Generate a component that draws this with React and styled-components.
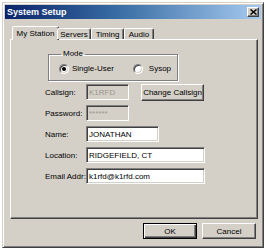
import React from 'react';
import styled, { createGlobalStyle } from 'styled-components';

const Global = createGlobalStyle`
	html, body {
		margin: 0;
		padding: 0;
		background: #ffffff;
	}
	body {
		padding: 2px;
		font-family: "Liberation Sans", Arial, sans-serif;
		font-size: 8px;
		color: #000;
	}
`;

const Window = styled.div`
	box-sizing: border-box;
	width: 262px;
	height: 246px;
	background: #d4d0c8;
	border: 1px solid;
	border-color: #d4d0c8 #404040 #404040 #d4d0c8;
	box-shadow: inset 1px 1px 0 #ffffff, inset -1px -1px 0 #808080;
	padding: 2px;
	display: flex;
	flex-direction: column;
`;

const TitleBar = styled.div`
	height: 14px;
	display: flex;
	align-items: center;
	justify-content: space-between;
	padding: 0 2px 0 2px;
	background: linear-gradient(to right, #0a246a 0%, #3a6ea5 45%, #a6caf0 100%);
`;

const Title = styled.span`
	color: #fff;
	font-weight: bold;
	font-size: 9px;
`;

const CloseButton = styled.div`
	box-sizing: border-box;
	width: 12px;
	height: 10px;
	background: #d4d0c8;
	border: 1px solid;
	border-color: #ffffff #404040 #404040 #ffffff;
	box-shadow: inset -1px -1px 0 #808080;
	display: flex;
	align-items: center;
	justify-content: center;
`;

const Body = styled.div`
	flex: 1;
	display: flex;
	flex-direction: column;
	padding: 7px 3px 0 5px;
`;

const TabStrip = styled.div`
	display: flex;
	align-items: flex-end;
	height: 13px;
	padding-left: 4px;
	position: relative;
	z-index: 1;
`;

const Tab = styled.div`
	box-sizing: border-box;
	width: ${p => p.$w}px;
	height: ${p => (p.$active ? 14 : 11)}px;
	margin: ${p => (p.$active ? '0 -2px -1px -2px' : '0')};
	padding-top: ${p => (p.$active ? 2 : 1)}px;
	text-align: center;
	background: #d4d0c8;
	border: 1px solid;
	border-bottom: none;
	border-color: #ffffff #404040 transparent #ffffff;
	border-radius: 2px 2px 0 0;
	box-shadow: inset -1px 0 0 #808080;
	white-space: nowrap;
`;

const Panel = styled.div`
	box-sizing: border-box;
	height: 180px;
	border: 1px solid;
	border-color: #ffffff #404040 #404040 #ffffff;
	box-shadow: inset -1px -1px 0 #808080;
	padding: 9px 0 0 34px;
`;

const ModeBox = styled.fieldset`
	box-sizing: border-box;
	width: 130px;
	height: 32px;
	margin: 0 0 3px 3px;
	padding: 0 0 0 10px;
	border: 1px solid #808080;
	box-shadow: 1px 1px 0 #ffffff, inset 1px 1px 0 #ffffff;
	display: flex;
	align-items: center;
	gap: 19px;
`;

const Legend = styled.legend`
	padding: 0 2px;
	margin-left: 2px;
	font-size: 8px;
	line-height: 10px;
`;

const Radio = styled.label`
	display: flex;
	align-items: center;
	gap: ${p => p.$gap || 3}px;
	margin-top: -2px;
`;

const RadioDot = styled.span`
	box-sizing: border-box;
	width: 10px;
	height: 10px;
	border-radius: 50%;
	background: #fff;
	border: 1px solid;
	border-color: #808080 #ffffff #ffffff #808080;
	box-shadow: inset 1px 1px 0 #404040, inset -1px -1px 0 #d4d0c8;
	display: flex;
	align-items: center;
	justify-content: center;

	&::after {
		content: '';
		width: 4px;
		height: 4px;
		border-radius: 50%;
		background: ${p => (p.$checked ? '#000' : 'transparent')};
	}
`;

const Form = styled.div`
	display: grid;
	grid-template-columns: 41px auto;
	grid-auto-rows: 16px;
	row-gap: 5px;
	align-items: center;
`;

const Label = styled.span`
	white-space: nowrap;
`;

const Field = styled.div`
	display: flex;
	align-items: flex-start;
	gap: 12px;
	height: 16px;
`;

const Input = styled.div`
	box-sizing: border-box;
	width: ${p => p.$w}px;
	height: 16px;
	padding: 0 2px;
	border: 1px solid;
	border-color: #808080 #ffffff #ffffff #808080;
	box-shadow: inset 1px 1px 0 #404040, inset -1px -1px 0 #d4d0c8;
	background: ${p => (p.$disabled ? '#d4d0c8' : '#ffffff')};
	color: ${p => (p.$disabled ? '#9a9890' : '#000')};
	white-space: nowrap;
	overflow: hidden;
	display: flex;
	align-items: center;
`;

const Button = styled.div`
	box-sizing: border-box;
	width: ${p => p.$w}px;
	height: ${p => p.$h || 16}px;
	display: flex;
	align-items: center;
	justify-content: center;
	background: #d4d0c8;
	border: 1px solid;
	border-color: ${p => (p.$default ? '#000' : '#ffffff #404040 #404040 #ffffff')};
	box-shadow: ${p =>
		p.$default
			? 'inset 1px 1px 0 #ffffff, inset -1px -1px 0 #404040, inset -2px -2px 0 #808080'
			: 'inset -1px -1px 0 #808080'};
	white-space: nowrap;
`;

const Footer = styled.div`
	display: flex;
	justify-content: flex-end;
	gap: 5px;
	margin-top: 4px;
	padding-right: 2px;
`;

const CloseIcon = () => (
	<svg width="7" height="6" viewBox="0 0 7 6">
		<path d="M0.5 0.5 L6.5 5.5 M6.5 0.5 L0.5 5.5" stroke="#000" strokeWidth="1.5" />
	</svg>
);

const tabs = [
	{ name: 'My Station', w: 43, active: true },
	{ name: 'Servers', w: 34 },
	{ name: 'Timing', w: 33 },
	{ name: 'Audio', w: 30 },
];

const App = () => {
	return (
		<>
			<Global />
			<Window>
				<TitleBar>
					<Title>System Setup</Title>
					<CloseButton>
						<CloseIcon />
					</CloseButton>
				</TitleBar>
				<Body>
					<TabStrip>
						{tabs.map(t => (
							<Tab key={t.name} $w={t.active ? t.w + 4 : t.w} $active={t.active}>
								{t.name}
							</Tab>
						))}
					</TabStrip>
					<Panel>
						<ModeBox>
							<Legend>Mode</Legend>
							<Radio>
								<RadioDot $checked />
								Single-User
							</Radio>
							<Radio $gap={6}>
								<RadioDot />
								Sysop
							</Radio>
						</ModeBox>
						<Form>
							<Label>Callsign:</Label>
							<Field>
								<Input $w={43} $disabled>K1RFD</Input>
								<Button $w={63} $h={17}>Change Callsign</Button>
							</Field>
							<Label>Password:</Label>
							<Field>
								<Input $w={43} $disabled>******</Input>
							</Field>
							<Label>Name:</Label>
							<Field>
								<Input $w={73}>JONATHAN</Input>
							</Field>
							<Label>Location:</Label>
							<Field>
								<Input $w={119}>RIDGEFIELD, CT</Input>
							</Field>
							<Label>Email Addr:</Label>
							<Field>
								<Input $w={119}>k1rfd@k1rfd.com</Input>
							</Field>
						</Form>
					</Panel>
					<Footer>
						<Button $w={54} $default>OK</Button>
						<Button $w={54}>Cancel</Button>
					</Footer>
				</Body>
			</Window>
		</>
	);
};

export default App;
